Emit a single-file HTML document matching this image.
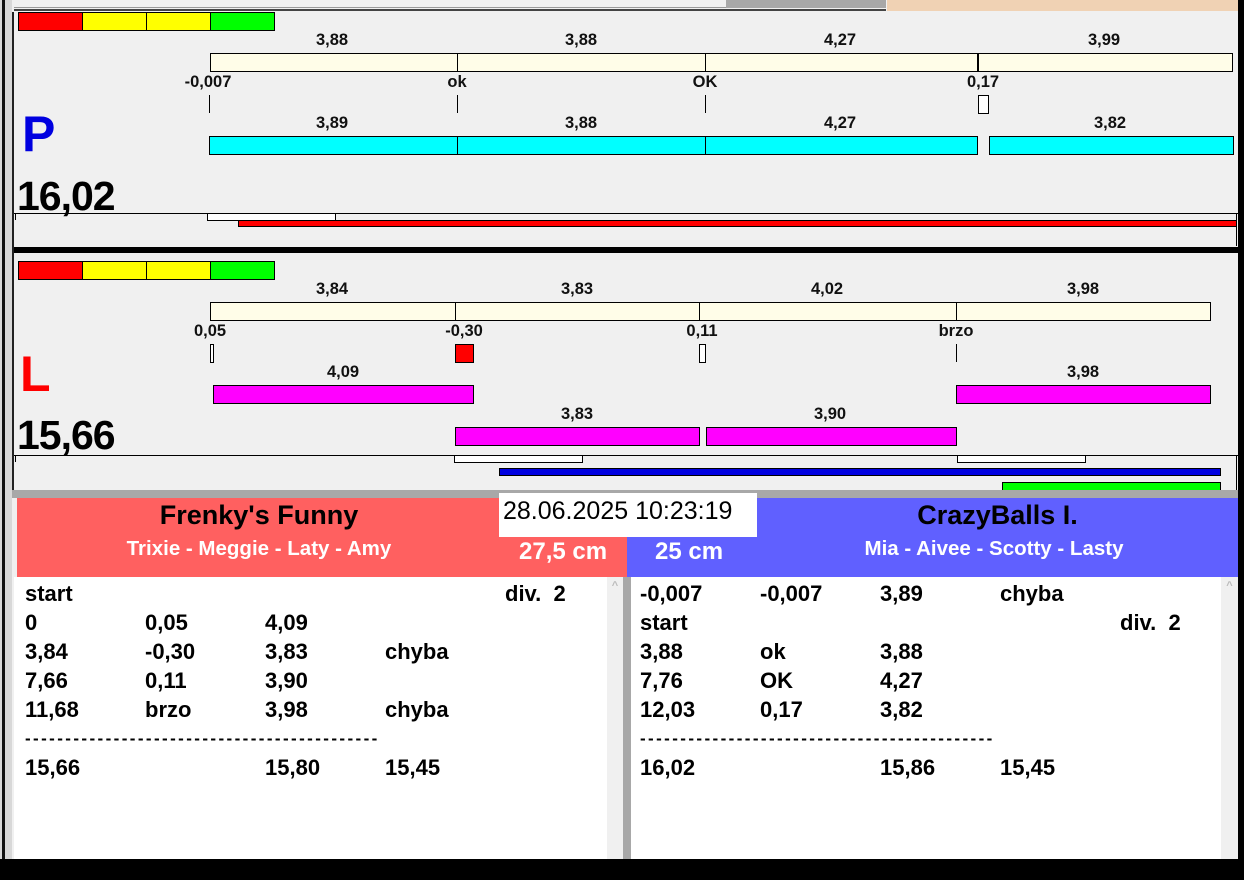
<!DOCTYPE html>
<html><head><meta charset="utf-8"><style>
*{margin:0;padding:0;box-sizing:border-box}
body{width:1244px;height:880px;background:#f0f0f0;position:relative;overflow:hidden;font-family:"Liberation Sans",Arial,sans-serif;font-weight:bold}
div{position:absolute}
.b{border:1px solid #000}
.l{font-size:16.5px;color:#111;transform:translateX(-50%);white-space:nowrap;line-height:16px}
.r{font-size:22px;color:#000;line-height:29px;white-space:nowrap}
.d{font-size:17px;letter-spacing:2.4px}
</style></head><body>
<div style="left:0;top:0;width:1244px;height:12px;background:#f0f0f0"></div>
<div style="left:14px;top:0;width:712px;height:8px;border-bottom:1px solid #999"></div>
<div style="left:726px;top:0;width:160px;height:8px;background:#a8a8a8"></div>
<div style="left:887px;top:0;width:352px;height:11px;background:#f0d2b4"></div>
<div style="left:14px;top:9px;width:872px;height:2px;background:#444"></div>
<div style="left:0;top:0;width:2px;height:880px;background:#d8d8d8"></div>
<div style="left:2px;top:0;width:3px;height:880px;background:#111"></div>
<div style="left:5px;top:0;width:7px;height:880px;background:#d8d8d8"></div>
<div style="left:12px;top:12px;width:2px;height:480px;background:#222"></div>
<div style="left:1238px;top:0;width:6px;height:880px;background:#000"></div>

<div class="b" style="left:18px;top:12px;width:65px;height:19px;background:#f00"></div>
<div class="b" style="left:82px;top:12px;width:65px;height:19px;background:#ff0"></div>
<div class="b" style="left:146px;top:12px;width:65px;height:19px;background:#ff0"></div>
<div class="b" style="left:210px;top:12px;width:65px;height:19px;background:#0f0"></div>

<div class="l" style="left:332px;top:32px">3,88</div>
<div class="l" style="left:581px;top:32px">3,88</div>
<div class="l" style="left:840px;top:32px">4,27</div>
<div class="l" style="left:1104px;top:32px">3,99</div>
<div class="b" style="left:210px;top:53px;width:1023px;height:19px;background:#fffde8"></div>
<div style="left:457px;top:53px;width:1px;height:19px;background:#000"></div>
<div style="left:705px;top:53px;width:1px;height:19px;background:#000"></div>
<div style="left:977px;top:53px;width:2px;height:19px;background:#000"></div>
<div class="l" style="left:208px;top:74px">-0,007</div>
<div class="l" style="left:457px;top:74px">ok</div>
<div class="l" style="left:705px;top:74px">OK</div>
<div class="l" style="left:983px;top:74px">0,17</div>
<div style="left:209px;top:95px;width:1px;height:18px;background:#000"></div>
<div style="left:457px;top:95px;width:1px;height:18px;background:#000"></div>
<div style="left:705px;top:95px;width:1px;height:18px;background:#000"></div>
<div class="b" style="left:978px;top:95px;width:11px;height:19px;background:#fff"></div>
<div class="l" style="left:332px;top:115px">3,89</div>
<div class="l" style="left:581px;top:115px">3,88</div>
<div class="l" style="left:840px;top:115px">4,27</div>
<div class="l" style="left:1110px;top:115px">3,82</div>
<div class="b" style="left:209px;top:136px;width:769px;height:19px;background:#0ff"></div>
<div style="left:457px;top:136px;width:1px;height:19px;background:#000"></div>
<div style="left:705px;top:136px;width:1px;height:19px;background:#000"></div>
<div class="b" style="left:989px;top:136px;width:245px;height:19px;background:#0ff"></div>
<div style="left:22px;top:106px;font-size:50px;color:#0000e0;line-height:56px">P</div>
<div style="left:17px;top:174px;font-size:41px;color:#000;line-height:44px;letter-spacing:-1px">16,02</div>
<div style="left:14px;top:213px;width:1224px;height:1px;background:#000"></div>
<div style="left:15px;top:213px;width:1px;height:7px;background:#000"></div>
<div class="b" style="left:207px;top:213px;width:129px;height:8px;background:#fff"></div>
<div class="b" style="left:238px;top:220px;width:999px;height:7px;background:#f00"></div>
<div style="left:1236px;top:213px;width:1px;height:33px;background:#000"></div>
<div style="left:14px;top:247px;width:1224px;height:6px;background:#000"></div>

<div class="b" style="left:18px;top:261px;width:65px;height:19px;background:#f00"></div>
<div class="b" style="left:82px;top:261px;width:65px;height:19px;background:#ff0"></div>
<div class="b" style="left:146px;top:261px;width:65px;height:19px;background:#ff0"></div>
<div class="b" style="left:210px;top:261px;width:65px;height:19px;background:#0f0"></div>
<div class="l" style="left:332px;top:281px">3,84</div>
<div class="l" style="left:577px;top:281px">3,83</div>
<div class="l" style="left:827px;top:281px">4,02</div>
<div class="l" style="left:1083px;top:281px">3,98</div>
<div class="b" style="left:210px;top:302px;width:1001px;height:19px;background:#fffde8"></div>
<div style="left:455px;top:302px;width:1px;height:19px;background:#000"></div>
<div style="left:699px;top:302px;width:1px;height:19px;background:#000"></div>
<div style="left:956px;top:302px;width:1px;height:19px;background:#000"></div>
<div class="l" style="left:210px;top:323px">0,05</div>
<div class="l" style="left:464px;top:323px">-0,30</div>
<div class="l" style="left:702px;top:323px">0,11</div>
<div class="l" style="left:956px;top:323px">brzo</div>
<div class="b" style="left:210px;top:344px;width:4px;height:19px;background:#fff"></div>
<div class="b" style="left:455px;top:344px;width:19px;height:19px;background:#f00"></div>
<div class="b" style="left:699px;top:344px;width:7px;height:19px;background:#fff"></div>
<div style="left:956px;top:344px;width:1px;height:18px;background:#000"></div>
<div style="left:20px;top:346px;font-size:50px;color:#f00;line-height:56px">L</div>
<div class="l" style="left:343px;top:364px">4,09</div>
<div class="l" style="left:1083px;top:364px">3,98</div>
<div class="b" style="left:213px;top:385px;width:261px;height:19px;background:#f0f"></div>
<div class="b" style="left:956px;top:385px;width:255px;height:19px;background:#f0f"></div>
<div class="l" style="left:577px;top:406px">3,83</div>
<div class="l" style="left:830px;top:406px">3,90</div>
<div class="b" style="left:455px;top:427px;width:245px;height:19px;background:#f0f"></div>
<div class="b" style="left:706px;top:427px;width:251px;height:19px;background:#f0f"></div>
<div style="left:17px;top:413px;font-size:41px;color:#000;line-height:44px;letter-spacing:-1px">15,66</div>
<div style="left:14px;top:455px;width:1224px;height:1px;background:#000"></div>
<div style="left:15px;top:455px;width:1px;height:7px;background:#000"></div>
<div class="b" style="left:454px;top:455px;width:129px;height:8px;background:#fff"></div>
<div class="b" style="left:957px;top:455px;width:129px;height:8px;background:#fff"></div>
<div class="b" style="left:499px;top:468px;width:722px;height:8px;background:#0000e0"></div>
<div class="b" style="left:1002px;top:482px;width:219px;height:9px;background:#0f0"></div>
<div style="left:1236px;top:455px;width:1px;height:35px;background:#000"></div>

<div style="left:12px;top:490px;width:1226px;height:8px;background:#a8a8a8"></div>

<div style="left:17px;top:498px;width:610px;height:79px;background:#ff6060"></div>
<div style="left:627px;top:498px;width:611px;height:79px;background:#6060ff"></div>
<div style="left:17px;top:499px;width:484px;text-align:center;font-size:27px;color:#000;line-height:32px">Frenky's Funny</div>
<div style="left:17px;top:536px;width:484px;text-align:center;font-size:20.5px;color:#fff;line-height:26px">Trixie - Meggie - Laty - Amy</div>
<div style="left:519px;top:537px;font-size:24px;color:#fff;line-height:30px">27,5 cm</div>
<div style="left:655px;top:537px;font-size:24px;color:#fff;line-height:30px">25 cm</div>
<div style="left:757px;top:499px;width:481px;text-align:center;font-size:27px;color:#000;line-height:32px">CrazyBalls I.</div>
<div style="left:757px;top:536px;width:474px;text-align:center;font-size:20.5px;color:#fff;line-height:26px">Mia - Aivee - Scotty - Lasty</div>
<div style="left:499px;top:493px;width:258px;height:44px;background:#fff;font-weight:normal;font-size:25px;line-height:36px;padding-left:4px;color:#000">28.06.2025 10:23:19</div>

<div style="left:14px;top:577px;width:3px;height:282px;background:#fff"></div>
<div style="left:17px;top:577px;width:590px;height:282px;background:#fff"></div>
<div style="left:607px;top:577px;width:16px;height:282px;background:#f0f0f0;color:#bbb;font-size:11px;text-align:center;line-height:18px">^</div>
<div style="left:623px;top:577px;width:8px;height:282px;background:#a8a8a8"></div>
<div style="left:631px;top:577px;width:590px;height:282px;background:#fff"></div>
<div style="left:1221px;top:577px;width:17px;height:282px;background:#f0f0f0;color:#bbb;font-size:11px;text-align:center;line-height:18px">^</div>

<div class="r" style="left:25px;top:579px">start</div><div class="r" style="left:505px;top:579px">div.&nbsp; 2</div>
<div class="r" style="left:25px;top:608px">0</div><div class="r" style="left:145px;top:608px">0,05</div><div class="r" style="left:265px;top:608px">4,09</div>
<div class="r" style="left:25px;top:637px">3,84</div><div class="r" style="left:145px;top:637px">-0,30</div><div class="r" style="left:265px;top:637px">3,83</div><div class="r" style="left:385px;top:637px">chyba</div>
<div class="r" style="left:25px;top:666px">7,66</div><div class="r" style="left:145px;top:666px">0,11</div><div class="r" style="left:265px;top:666px">3,90</div>
<div class="r" style="left:25px;top:695px">11,68</div><div class="r" style="left:145px;top:695px">brzo</div><div class="r" style="left:265px;top:695px">3,98</div><div class="r" style="left:385px;top:695px">chyba</div>
<div class="r d" style="left:25px;top:724px">--------------------------------------------</div>
<div class="r" style="left:25px;top:753px">15,66</div><div class="r" style="left:265px;top:753px">15,80</div><div class="r" style="left:385px;top:753px">15,45</div>

<div class="r" style="left:640px;top:579px">-0,007</div><div class="r" style="left:760px;top:579px">-0,007</div><div class="r" style="left:880px;top:579px">3,89</div><div class="r" style="left:1000px;top:579px">chyba</div>
<div class="r" style="left:640px;top:608px">start</div><div class="r" style="left:1120px;top:608px">div.&nbsp; 2</div>
<div class="r" style="left:640px;top:637px">3,88</div><div class="r" style="left:760px;top:637px">ok</div><div class="r" style="left:880px;top:637px">3,88</div>
<div class="r" style="left:640px;top:666px">7,76</div><div class="r" style="left:760px;top:666px">OK</div><div class="r" style="left:880px;top:666px">4,27</div>
<div class="r" style="left:640px;top:695px">12,03</div><div class="r" style="left:760px;top:695px">0,17</div><div class="r" style="left:880px;top:695px">3,82</div>
<div class="r d" style="left:640px;top:724px">--------------------------------------------</div>
<div class="r" style="left:640px;top:753px">16,02</div><div class="r" style="left:880px;top:753px">15,86</div><div class="r" style="left:1000px;top:753px">15,45</div>

<div style="left:0;top:859px;width:1244px;height:21px;background:#000"></div>
</body></html>
